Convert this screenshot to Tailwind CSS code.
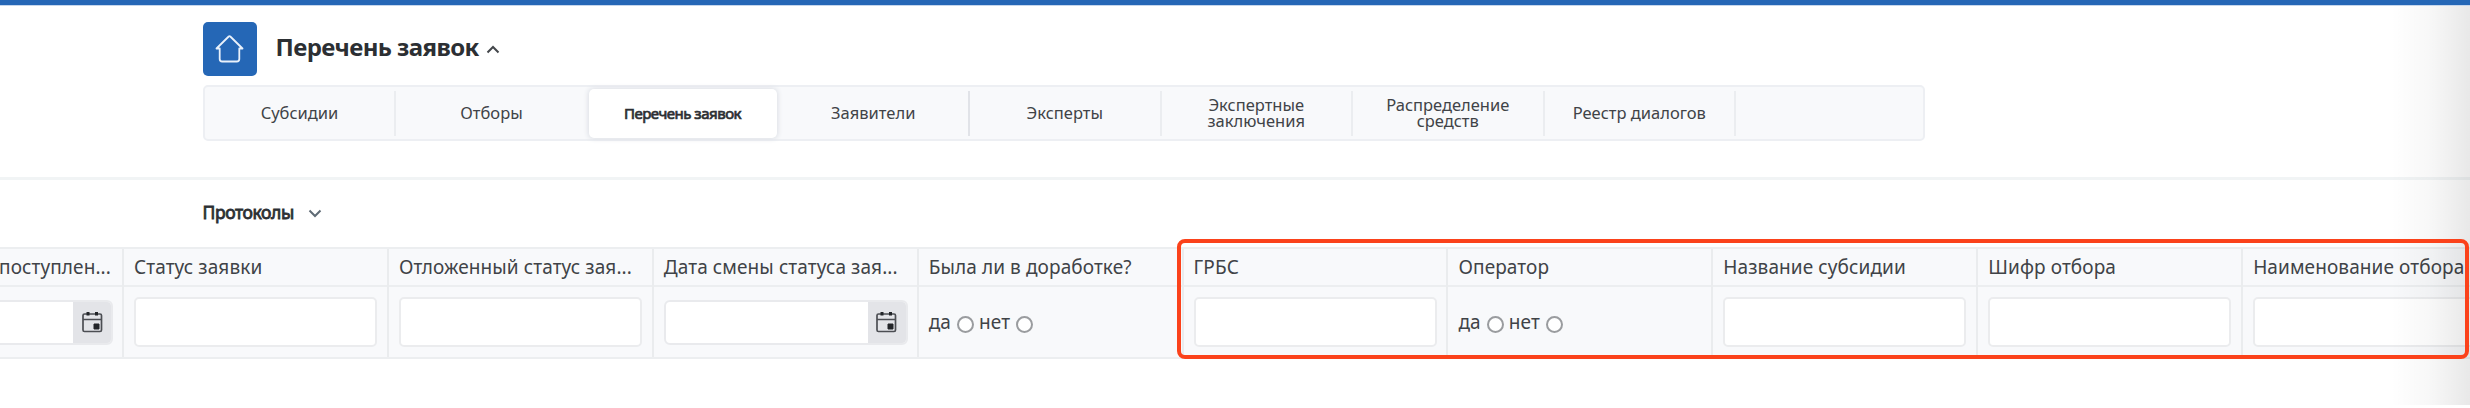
<!DOCTYPE html>
<html lang="ru">
<head>
<meta charset="utf-8">
<title>Перечень заявок</title>
<script src="https://cdn.jsdelivr.net/npm/@tailwindcss/browser@4"></script>
</head>
<body class="bg-white">
<div class="relative h-[408px] w-[2470px] overflow-hidden bg-white font-['Noto_Sans',sans-serif] text-[#404347]">
  <div class="h-[5px] bg-[#2567b6]"></div>
  <div class="h-px bg-[#c5d6ec]"></div>

  <header class="h-[174px] border-b-3 border-[#f1f4f5] pt-4 pl-[203px]">
    <div class="flex h-[54px] items-start">
      <a class="flex h-[54px] w-[54px] items-center justify-center rounded-[5px] bg-[#2567b6]">
        <svg class="h-[30px] w-[30px]" viewBox="0 0 30 30" fill="none" stroke="#e9f1fb" stroke-width="1.8" stroke-linejoin="round" stroke-linecap="round"><path d="M13.700 2.500 1.500 14.500h3.200v10.500q0 2.500 2.500 2.500h14.600q2.500 0 2.500-2.500V14.500h3.200L15.300 2.500q-.8-.7-1.600 0Z"/></svg>
      </a>
      <h1 class="ml-[18.5px] mt-[7px] whitespace-nowrap text-2xl leading-9 font-bold tracking-[-0.58px] text-[#2c2f33]">Перечень заявок</h1>
      <svg class="ml-[7.5px] mt-[23px] h-[9px] w-[14px]" viewBox="0 0 14 9" fill="none" stroke="#44474b" stroke-width="2"><path d="M1.500 7.500 7 2l5.500 5.500"/></svg>
    </div>

    <nav class="mt-[9px] flex h-14 w-[1722px] items-center rounded-[5px] border-2 border-[#edeff3] bg-[#f8f9fb] text-center text-[16.5px] leading-4">
      <a class="flex h-[45px] w-[191px] items-center justify-center border-r-2 border-[#ebedf0]">Субсидии</a>
      <a class="flex h-[45px] w-[191px] items-center justify-center">Отборы</a>
      <a class="mr-[2px] ml-[1.5px] flex h-[49px] w-[188px] items-center justify-center rounded-[5px] bg-white text-[15px] tracking-[-0.5px] text-[#2c2f33] shadow-[0_0_5px_1px_#dcdfe5] [-webkit-text-stroke:0.7px]">Перечень заявок</a>
      <a class="flex h-[45px] w-[191.5px] items-center justify-center border-r-2 border-[#e1e3e8]">Заявители</a>
      <a class="flex h-[45px] w-[191.5px] items-center justify-center border-r-2 border-[#ebedf0]">Эксперты</a>
      <a class="flex h-[45px] w-[191.5px] items-center justify-center border-r-2 border-[#ebedf0]">Экспертные<br>заключения</a>
      <a class="flex h-[45px] w-[191.5px] items-center justify-center border-r-2 border-[#ebedf0]">Распределение<br>средств</a>
      <a class="flex h-[45px] w-[191.5px] items-center justify-center border-r-2 border-[#ebedf0]">Реестр диалогов</a>
    </nav>
  </header>

  <div class="flex h-[67px] items-center pb-1 pl-[202.5px]">
    <span class="text-[17.5px] leading-6 tracking-[-0.4px] text-[#2c2f33] [-webkit-text-stroke:0.8px]">Протоколы</span>
    <svg class="mt-[3px] ml-[14.5px] h-[9px] w-[14px]" viewBox="0 0 14 9" fill="none" stroke="#5f6b75" stroke-width="2"><path d="M1.500 1.500 7 7l5.500-5.500"/></svg>
  </div>

  <div id="grid" class="flex h-[112px] w-[2600px] border-y-2 border-[#eceef0] bg-[#f8f9fb] text-[19px] leading-7 tracking-[0.1px]"></div>

  <div class="absolute top-1.5 right-0 h-[399px] w-[80px] bg-linear-to-r from-black/0 via-black/3 to-black/9"></div>
  <div class="absolute top-[239px] left-[1177px] h-[120px] w-[1292px] rounded-[8px] border-4 border-[#fb421b]"></div>
</div>

<template id="text"><div class="h-[50px] w-[243px] rounded-[5px] border-2 border-[#ebecee] bg-white"></div></template>
<template id="date">
  <div class="flex h-[45px] w-[244px] shrink-0 overflow-hidden rounded-[6px] border-2 border-[#e9eaed] bg-white">
    <div class="flex-1"></div>
    <div class="flex w-[38px] items-center justify-center bg-[#e3e4e8]">
      <svg class="h-[22px] w-[21px]" viewBox="0 0 21 22" fill="none" stroke="#4c4e53" stroke-width="1.700"><rect x="1" y="3" width="18.500" height="17.500" rx="1.500"/><path d="M1 8.500h18.500"/><path d="M6 1v3.500M14.500 1v3.500" stroke="#222529" stroke-width="3"/><path d="M12 13h5v5h-5z" fill="#222529" stroke="#222529" stroke-width="1"/></svg>
    </div>
  </div>
</template>
<template id="radio">
  <div class="flex items-center">
    <span>да</span><i class="mt-1 ml-[6px] h-[17px] w-[17px] rounded-full border-2 border-[#9a9c9f] bg-white"></i>
    <span class="ml-[5px]">нет</span><i class="mt-1 ml-[6px] h-[17px] w-[17px] rounded-full border-2 border-[#9a9c9f] bg-white"></i>
  </div>
</template>
<script>
const columns = [
  ['поступлен...', 'date'], ['Статус заявки', 'text'], ['Отложенный статус зая...', 'text'],
  ['Дата смены статуса зая...', 'date'], ['Была ли в доработке?', 'radio'], ['ГРБС', 'text'],
  ['Оператор', 'radio'], ['Название субсидии', 'text'], ['Шифр отбора', 'text'], ['Наименование отбора', 'text']
];
const grid = document.getElementById('grid');
columns.forEach(([title, kind], i) => {
  const col = document.createElement('div');
  col.className = i ? 'w-[264.9px] shrink-0 border-r-2 border-[#eaecee]' : 'flex w-[124px] shrink-0 flex-col items-end border-r-2 border-[#eaecee]';
  const head = document.createElement('div');
  head.className = i ? 'flex h-[38px] items-center border-b-2 border-[#eceef0] pl-[10px] whitespace-nowrap' : 'flex h-[38px] w-full items-center justify-end border-b-2 border-[#eceef0] pr-[11px] whitespace-nowrap';
  head.textContent = title;
  const body = document.createElement('div');
  body.className = i ? 'flex h-[70px] items-center pl-[10px]' : 'flex h-[70px] items-center pr-[9px]';
  body.append(document.getElementById(kind).content.cloneNode(true));
  col.append(head, body);
  grid.append(col);
});
</script>
</body>
</html>
